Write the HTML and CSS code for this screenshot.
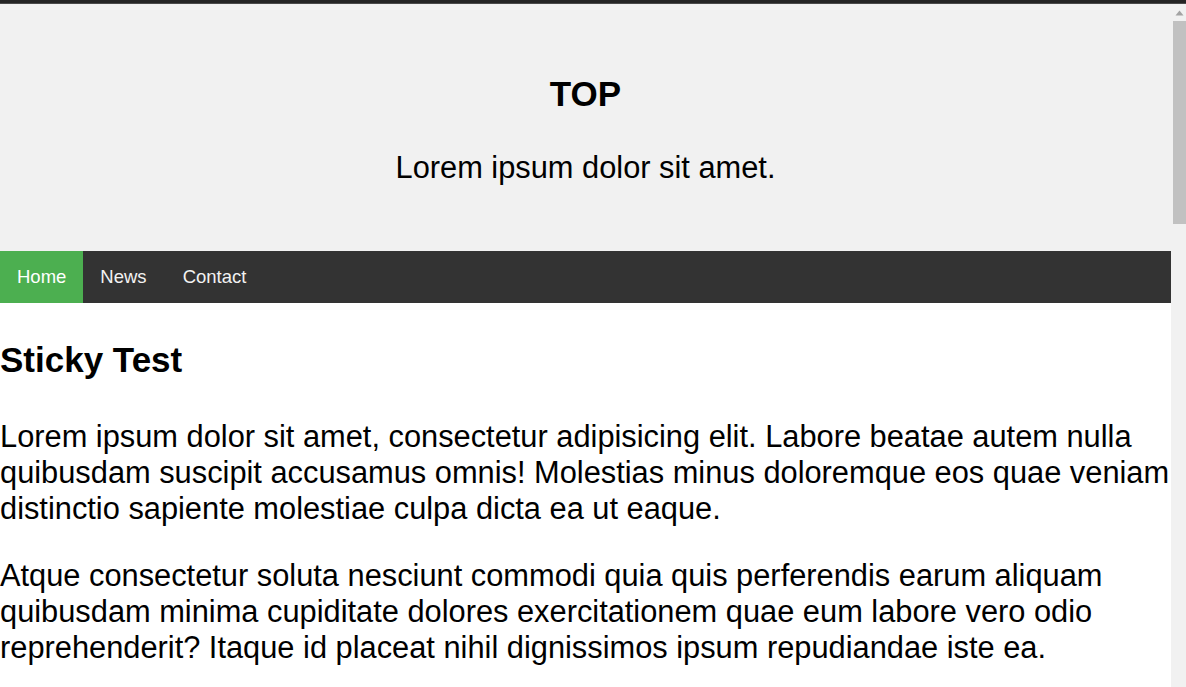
FILE: index.html
```html
<!DOCTYPE html>
<html lang="en">
<head>
<meta charset="utf-8">
<title>Sticky Test</title>
<link rel="stylesheet" href="styles.css">
</head>
<body>
<div class="frame">
  <div class="topbar"></div>
  <div class="viewport">
    <div class="page">
      <header class="header">
        <h1 class="header-title">TOP</h1>
        <p class="header-text">Lorem ipsum dolor sit amet.</p>
      </header>
      <nav class="navbar">
        <a class="nav-link active" href="#">Home</a>
        <a class="nav-link" href="#">News</a>
        <a class="nav-link" href="#">Contact</a>
      </nav>
      <main class="content">
        <h2 class="content-title">Sticky Test</h2>
        <p class="content-text">Lorem ipsum dolor sit amet, consectetur adipisicing elit. Labore beatae autem nulla quibusdam suscipit accusamus omnis! Molestias minus doloremque eos quae veniam distinctio sapiente molestiae culpa dicta ea ut eaque.</p>
        <p class="content-text">Atque consectetur soluta nesciunt commodi quia quis perferendis earum aliquam quibusdam minima cupiditate dolores exercitationem quae eum labore vero odio reprehenderit? Itaque id placeat nihil dignissimos ipsum repudiandae iste ea.</p>
      </main>
    </div>
    <div class="scrollbar">
      <div class="scroll-arrow">
        <svg width="9" height="6" viewBox="0 0 9 6"><path d="M0.5 5.5 L4.5 0.5 L8.5 5.5 Z" fill="#a3a3a3"/></svg>
      </div>
      <div class="scroll-thumb"></div>
    </div>
  </div>
</div>
</body>
</html>
```

FILE: styles.css
```css
html, body {
  margin: 0;
  padding: 0;
  overflow: hidden;
  background: #ffffff;
}

body {
  font-family: "Liberation Sans", Arial, sans-serif;
  color: #000000;
}

.frame {
  display: flex;
  flex-direction: column;
  height: 100vh;
}

.topbar {
  height: 3px;
  background: #252525;
  border-bottom: 1px solid #4a4a4a;
  flex: none;
}

.viewport {
  flex: 1;
  display: flex;
  min-height: 0;
}

.page {
  flex: 1;
  min-width: 0;
  overflow: hidden;
}

.header {
  background: #f1f1f1;
  text-align: center;
  padding: 70px 0 65px;
}

.header-title {
  margin: 0;
  font-size: 35px;
  line-height: 40px;
  font-weight: bold;
}

.header-text {
  margin: 36px 0 0;
  font-size: 30.8px;
  line-height: 36px;
}

.navbar {
  display: flex;
  background: #333333;
  height: 52px;
}

.nav-link {
  display: block;
  color: #f2f2f2;
  text-decoration: none;
  font-size: 18.5px;
  line-height: 22px;
  padding: 15px 17px;
}

.nav-link + .nav-link + .nav-link {
  margin-left: 2px;
}

.nav-link.active {
  background: #4caf50;
  color: #ffffff;
}

.content {
  padding-top: 37px;
}

.content-title {
  margin: 0 0 39px;
  font-size: 35px;
  line-height: 40px;
  font-weight: bold;
}

.content-text {
  margin: 0 0 31px;
  font-size: 30.8px;
  line-height: 36px;
}

.scrollbar {
  flex: none;
  width: 15px;
  background: #f1f1f1;
  display: flex;
  flex-direction: column;
}

.scroll-arrow {
  height: 17px;
  display: flex;
  align-items: center;
  justify-content: center;
  padding-left: 2px;
}

.scroll-thumb {
  margin-left: 2px;
  height: 203px;
  background: #c1c1c1;
}
```
